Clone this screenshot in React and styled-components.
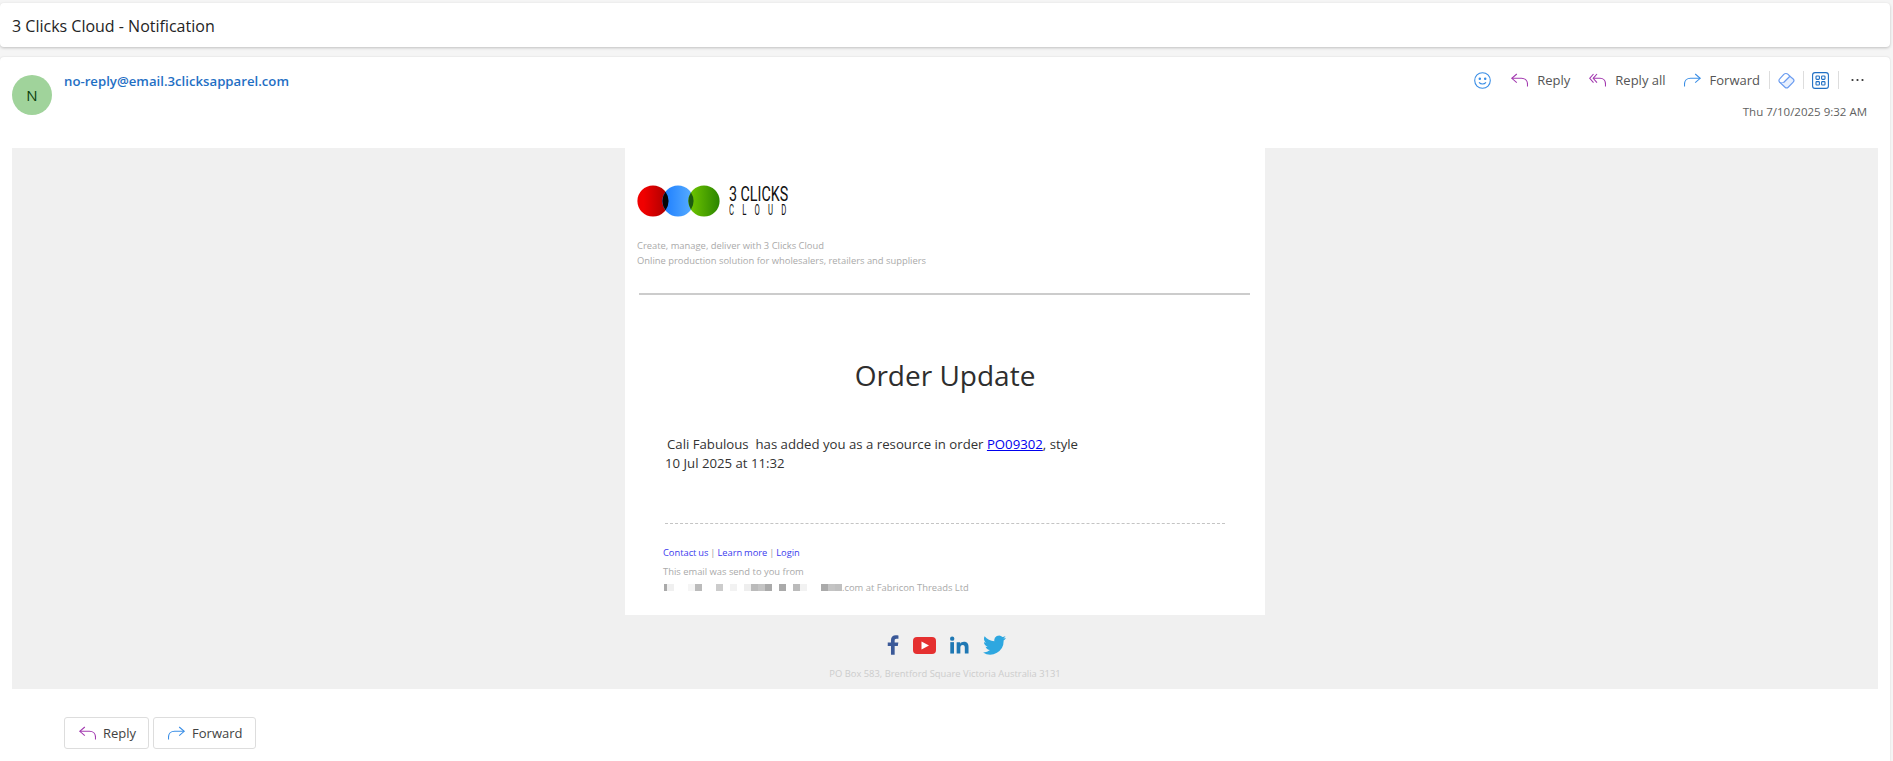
import React from 'react';
import styled, { createGlobalStyle } from 'styled-components';

const GlobalStyle = createGlobalStyle`
  html, body {
    margin: 0;
    padding: 0;
    height: 100%;
    overflow: hidden;
    background: #f5f5f5;
    font-family: 'Open Sans', 'Noto Sans', sans-serif;
  }
`;

const REDACTED = [
  [3, '#aaa'], [7, '#f0f0f0'], [14, 'transparent'], [7, '#f5f5f5'], [7, '#bbb'], [14, 'transparent'],
  [7, '#ccc'], [7, 'transparent'], [7, '#f2f2f2'], [7, 'transparent'], [7, '#eee'], [7, '#bbb'],
  [7, '#c4c4c4'], [7, '#aaa'], [7, 'transparent'], [7, '#aaa'], [7, 'transparent'], [7, '#bbb'],
  [7, '#f2f2f2'], [14, 'transparent'], [7, '#aaa'], [7, '#c4c4c4'], [7, '#c0c0c0'],
];

const ReplyIcon = () => (
  <svg width="17" height="14" viewBox="0 0 17 14" fill="none" stroke="#a33ab0" strokeWidth="1.1">
    <path d="M5.800 1 .8 5.300 5.800 9.600" />
    <path d="M.8 5.300H10.500c3.500 0 6 2.400 6 5.700v2.500" />
  </svg>
);

const ReplyAllIcon = () => (
  <svg width="17" height="14" viewBox="0 0 17 14" fill="none" stroke="#a33ab0" strokeWidth="1.1">
    <path d="M4.500 1 .7 5.300 4.500 9.600" />
    <path d="M8 1 4.200 5.300 8 9.600" />
    <path d="M4.200 5.300H11c3.300 0 5.500 2.400 5.500 5.700v2.500" />
  </svg>
);

const ForwardIcon = () => (
  <svg width="17" height="14" viewBox="0 0 17 14" fill="none" stroke="#3a8ee6" strokeWidth="1.1">
    <path d="M11.200 1 16.200 5.300 11.200 9.600" />
    <path d="M16.200 5.300H6.500c-3.500 0-6 2.400-6 5.700v2.500" />
  </svg>
);

const SmileIcon = () => (
  <svg width="17" height="17" viewBox="0 0 17 17" fill="none" stroke="#3a8ee6" strokeWidth="1.1">
    <circle cx="8.500" cy="8.500" r="7.800" />
    <circle cx="5.800" cy="6.800" r="0.7" fill="#3a8ee6" />
    <circle cx="11.200" cy="6.800" r="0.7" fill="#3a8ee6" />
    <path d="M5 10.400c1.800 2.200 5.200 2.200 7 0" />
  </svg>
);

const TagIcon = () => (
  <svg width="17" height="17" viewBox="0 0 17 17" fill="none" stroke="#6b9cf0" strokeWidth="1.2">
    <path d="M1.700 6.900 5.800 2.400a3 3 0 0 1 4.300 0l1.800 1.900-6.300 6.400-3.900-.4a2.300 2.300 0 0 1 0-3.400z" fill="#fff" />
    <path d="M1.800 10.300 7 15.200a2.300 2.300 0 0 0 3.200 0l5-5a2.300 2.300 0 0 0 0-3.200L11.900 4.300 5.600 10.700" fill="#e8f0fe" />
  </svg>
);

const AppsIcon = () => (
  <svg width="17" height="17" viewBox="0 0 17 17" fill="none" stroke="#1f6fc4" strokeWidth="1.100">
    <rect x="0.600" y="0.600" width="15.800" height="15.800" rx="2.500" />
    <rect x="4" y="4" width="3.400" height="3.400" rx="0.800" />
    <rect x="9.600" y="4" width="3.400" height="3.400" rx="0.800" />
    <rect x="4" y="9.600" width="3.400" height="3.400" rx="0.800" />
    <rect x="9.600" y="9.600" width="3.400" height="3.400" rx="0.800" />
  </svg>
);

const MoreIcon = () => (
  <svg width="13" height="4" viewBox="0 0 13 4" fill="#333">
    <circle cx="1.500" cy="2" r="1.100" />
    <circle cx="6.500" cy="2" r="1.100" />
    <circle cx="11.500" cy="2" r="1.100" />
  </svg>
);

const LogoRow = styled.div`
  display: flex;
  align-items: flex-start;
  gap: 9px;
  height: 32px;
`;

const LogoWords = styled.div`
  width: 59px;
  font-family: Roboto, sans-serif;
  color: #111;
`;

const LogoTop = styled.div`
  font-size: 21px;
  line-height: 19px;
  white-space: nowrap;
  transform: scaleX(0.68);
  transform-origin: left;
`;

const LogoBottom = styled.div`
  font-size: 14px;
  line-height: 13px;
  letter-spacing: 15px;
  white-space: nowrap;
  transform: scaleX(0.55);
  transform-origin: left;
`;

const Logo = () => (
  <LogoRow>
    <svg width="83" height="32" viewBox="0 0 83 32">
      <defs>
        <linearGradient id="logoRed" x1="0" x2="1">
          <stop offset="0.2" stopColor="#f00000" />
          <stop offset="1" stopColor="#a80000" />
        </linearGradient>
        <linearGradient id="logoBlue" x1="0" x2="1">
          <stop offset="0" stopColor="#1a7cff" />
          <stop offset="1" stopColor="#5aaeff" />
        </linearGradient>
        <linearGradient id="logoGreen" x1="0" x2="1">
          <stop offset="0" stopColor="#72c800" />
          <stop offset="1" stopColor="#2b8500" />
        </linearGradient>
      </defs>
      <circle cx="16" cy="16" r="15.600" fill="url(#logoRed)" />
      <circle cx="41" cy="16" r="15.600" fill="url(#logoBlue)" />
      <path d="M28.500 6.700a15.600 15.600 0 0 1 0 18.600 15.600 15.600 0 0 1 0-18.600z" fill="#050505" />
      <circle cx="67" cy="16" r="15.600" fill="url(#logoGreen)" />
      <path d="M54 7.400a15.600 15.600 0 0 1 0 17.200 15.600 15.600 0 0 1 0-17.200z" fill="#1d5a10" />
    </svg>
    <LogoWords>
      <LogoTop>3 CLICKS</LogoTop>
      <LogoBottom>CLOUD</LogoBottom>
    </LogoWords>
  </LogoRow>
);

const YoutubeIcon = () => (
  <svg width="23" height="17" viewBox="0 0 23 17">
    <rect width="23" height="17" rx="4" fill="#e53030" />
    <path d="M8.500 4.500 16 8.500 8.500 12.500z" fill="#fff" />
  </svg>
);

const FacebookIcon = () => (
  <svg width="12" height="20" viewBox="0 0 13 21" fill="#3b5998">
    <path d="M8.300 21V11.600h3.400l.6-3.800h-4V5.500c0-1.100.4-1.900 2-1.900h2.100V.3C12 .2 10.800 0 9.500 0 6.400 0 4.300 1.900 4.300 5.200v2.600H.8v3.800h3.500V21z" />
  </svg>
);

const LinkedinIcon = () => (
  <svg width="19" height="18" viewBox="0 0 20 18" fill="#1f78b4">
    <rect x="0.300" y="6" width="3.900" height="12" />
    <circle cx="2.300" cy="2.300" r="2.300" />
    <path d="M7 6h3.700v1.700c.7-1.200 2.200-2 4-2 3.600 0 4.800 2.200 4.800 5.500V18h-3.900v-6c0-1.700-.5-3-2.200-3-1.800 0-2.500 1.300-2.500 3v6H7z" />
  </svg>
);

const TwitterIcon = () => (
  <svg width="23" height="20" viewBox="0 0 24 20" fill="#2ea7e0">
    <path d="M24 2.400c-.9.400-1.800.7-2.800.8 1-.6 1.800-1.600 2.200-2.700-1 .6-2 1-3.100 1.200A4.900 4.900 0 0 0 11.900 6.100C7.800 5.900 4.200 4 1.700.9.400 3.100 1 6 3.200 7.500c-.8 0-1.600-.2-2.200-.6 0 2.400 1.700 4.400 3.900 4.900-.7.200-1.500.2-2.200.1.600 2 2.400 3.400 4.600 3.400A9.900 9.900 0 0 1 0 17.800 14 14 0 0 0 21.500 5.400c1-.7 1.800-1.700 2.500-3z" />
  </svg>
);

const Page = styled.div`
  height: 761px;
  padding-top: 3px;
  box-sizing: border-box;
  overflow: hidden;
`;

const SubjectBar = styled.div`
  height: 44px;
  box-sizing: border-box;
  margin-right: 3px;
  padding: 2px 0 0 12px;
  display: flex;
  align-items: center;
  background: #fff;
  border-radius: 4px;
  box-shadow: 0 1px 3px rgba(0, 0, 0, 0.22);
  font-size: 16px;
  font-weight: 500;
  color: #242424;
`;

const MessageCard = styled.div`
  margin: 10px 3px 0 0;
  height: 704px;
  background: #fff;
  border-radius: 4px 4px 0 0;
  box-shadow: 0 0 2px rgba(0, 0, 0, 0.14);
`;

const Header = styled.div`
  height: 91px;
  padding: 0 23px 0 12px;
  display: flex;
  justify-content: space-between;
`;

const Sender = styled.div`
  display: flex;
  gap: 12px;
  padding-top: 18px;
`;

const Avatar = styled.div`
  width: 40px;
  height: 40px;
  border-radius: 50%;
  background: #a0d39b;
  color: #0b3d0b;
  font-size: 15px;
  display: flex;
  align-items: center;
  justify-content: center;
`;

const SenderAddress = styled.a`
  margin-top: -3px;
  font-size: 13.200px;
  font-weight: 600;
  line-height: 18px;
  color: #1f6fc4;
`;

const HeaderRight = styled.div`
  display: flex;
  flex-direction: column;
  align-items: flex-end;
  padding-top: 11px;
`;

const Toolbar = styled.div`
  display: flex;
  align-items: center;
  height: 24px;
  padding-right: 3px;
`;

const ToolAction = styled.div`
  display: flex;
  align-items: center;
  gap: 9px;
  margin-left: ${(p) => p.$gap}px;
  font-size: 13px;
  color: #555;
`;

const ToolDivider = styled.span`
  width: 1px;
  height: 18px;
  margin: 0 ${(p) => p.$after}px 0 ${(p) => p.$before}px;
  background: #ddd;
`;

const Timestamp = styled.div`
  margin-top: 12px;
  font-size: 11.500px;
  color: #616161;
`;

const MailBackdrop = styled.div`
  margin: 0 12px;
  height: 541px;
  background: #f0f0f0;
  display: flex;
  flex-direction: column;
  align-items: center;
`;

const MailBody = styled.div`
  width: 640px;
  height: 467px;
  box-sizing: border-box;
  padding: 37px 12px 0;
  background: #fff;
`;

const Tagline = styled.div`
  margin-top: 21px;
  font-size: 9.400px;
  line-height: 15px;
  color: #aaa;
`;

const Rule = styled.hr`
  margin: 25px 3px 0 2px;
  border: 0;
  border-top: 2px solid #ccc;
`;

const Heading = styled.h1`
  margin: 60px 0 0;
  text-align: center;
  font-size: 28px;
  font-weight: 400;
  line-height: 40px;
  color: #2e2e2e;
`;

const Message = styled.div`
  margin: 40px 0 0 28px;
  font-size: 13.200px;
  line-height: 19px;
  color: #333;
`;

const FirstLine = styled.div`
  padding-left: 2px;
`;

const OrderLink = styled.a`
  color: #0000ee;
  text-decoration: underline;
`;

const DashedRule = styled.div`
  margin: 50px 28px 0 28px;
  border-top: 1px dashed #c4c4c4;
`;

const FooterLinks = styled.div`
  margin: 22px 0 0 26px;
  font-size: 9.300px;
  line-height: 14px;
  word-spacing: -0.5px;
  color: #999;
`;

const FooterLink = styled.a`
  color: #3b3bee;
`;

const FooterNote = styled.div`
  margin: 4px 0 0 26px;
  font-size: 9.400px;
  line-height: 15px;
  color: #aaa;
`;

const FooterAccount = styled(FooterNote)`
  display: flex;
  align-items: center;
  margin: 1px 0 0 27px;
`;

const Pixel = styled.span`
  width: ${(p) => p.$w}px;
  height: 7px;
  background: ${(p) => p.$shade};
`;

const SocialRow = styled.div`
  display: flex;
  align-items: center;
  gap: 14px;
  margin: 19px 0 0 3px;
  height: 22px;
`;

const Address = styled.div`
  margin-top: 11px;
  font-size: 9.400px;
  line-height: 14px;
  color: #ccc;
`;

const FooterActions = styled.div`
  display: flex;
  gap: 4px;
  margin: 28px 0 0 64px;
`;

const FooterButton = styled.button`
  display: flex;
  align-items: center;
  gap: 7px;
  height: 32px;
  padding: 0 12px 0 14px;
  background: #fff;
  border: 1px solid #ddd;
  border-radius: 3px;
  font-family: inherit;
  font-size: 13px;
  color: #424242;
`;

export default function App() {
  return (
    <Page>
      <GlobalStyle />
      <SubjectBar>3 Clicks Cloud - Notification</SubjectBar>
      <MessageCard>
        <Header>
          <Sender>
            <Avatar>N</Avatar>
            <SenderAddress>no-reply@email.3clicksapparel.com</SenderAddress>
          </Sender>
          <HeaderRight>
            <Toolbar>
              <SmileIcon />
              <ToolAction $gap={20}><ReplyIcon />Reply</ToolAction>
              <ToolAction $gap={19}><ReplyAllIcon />Reply all</ToolAction>
              <ToolAction $gap={18}><ForwardIcon />Forward</ToolAction>
              <ToolDivider $before={9} $after={8} />
              <TagIcon />
              <ToolDivider $before={8} $after={8} />
              <AppsIcon />
              <ToolDivider $before={9} $after={12} />
              <MoreIcon />
            </Toolbar>
            <Timestamp>Thu 7/10/2025 9:32 AM</Timestamp>
          </HeaderRight>
        </Header>
        <MailBackdrop>
          <MailBody>
            <Logo />
            <Tagline>
              Create, manage, deliver with 3 Clicks Cloud
              <br />
              Online production solution for wholesalers, retailers and suppliers
            </Tagline>
            <Rule />
            <Heading>Order Update</Heading>
            <Message>
              <FirstLine>
                Cali Fabulous&nbsp; has added you as a resource in order <OrderLink href="#">PO09302</OrderLink>, style
              </FirstLine>
              10 Jul 2025 at 11:32
            </Message>
            <DashedRule />
            <FooterLinks>
              <FooterLink>Contact us</FooterLink> | <FooterLink>Learn more</FooterLink> | <FooterLink>Login</FooterLink>
            </FooterLinks>
            <FooterNote>This email was send to you from</FooterNote>
            <FooterAccount>
              {REDACTED.map(([w, shade], i) => (
                <Pixel key={i} $w={w} $shade={shade} />
              ))}
              .com at Fabricon Threads Ltd
            </FooterAccount>
          </MailBody>
          <SocialRow>
            <FacebookIcon />
            <YoutubeIcon />
            <LinkedinIcon />
            <TwitterIcon />
          </SocialRow>
          <Address>PO Box 583, Brentford Square Victoria Australia 3131</Address>
        </MailBackdrop>
        <FooterActions>
          <FooterButton><ReplyIcon />Reply</FooterButton>
          <FooterButton><ForwardIcon />Forward</FooterButton>
        </FooterActions>
      </MessageCard>
    </Page>
  );
}
